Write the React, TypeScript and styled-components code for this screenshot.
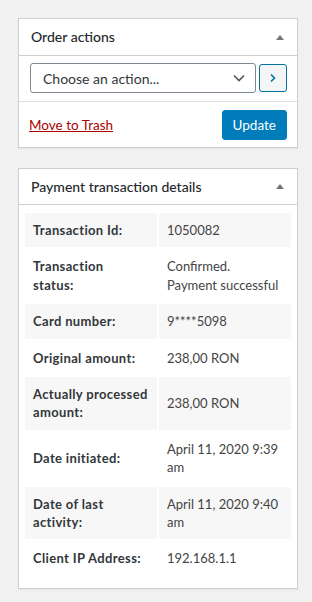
import React from 'react';
import styled, { createGlobalStyle } from 'styled-components';

const GlobalStyle = createGlobalStyle`
  html, body {
    margin: 0;
    padding: 0;
    background: #f1f1f1;
  }
  body {
    font-family: Lato, "Liberation Sans", sans-serif;
    font-size: 13px;
    color: #444;
  }
`;

const Page = styled.div`
  padding: 18px 15px 14px 18px;
  width: 280px;
  display: flex;
  flex-direction: column;
  gap: 20px;
`;

const Panel = styled.div`
  background: #fff;
  border: 1px solid #ccd0d4;
  box-shadow: 0 1px 1px rgba(0, 0, 0, 0.04);
`;

const PanelHeader = styled.div<{ $tall?: boolean }>`
  display: flex;
  align-items: center;
  justify-content: space-between;
  height: ${(p) => (p.$tall ? '36px' : '35px')};
  padding: 0 13px 0 12px;
  border-bottom: 1px solid #ccd0d4;
`;

const PanelTitle = styled.h2`
  margin: 0;
  font-size: 14px;
  font-weight: 500;
  color: #23282d;
  line-height: 1.4;
`;

const Toggle = styled.span`
  width: 0;
  height: 0;
  border-left: 4px solid transparent;
  border-right: 4px solid transparent;
  border-bottom: 5px solid #72777c;
`;

const Section = styled.div<{ $divider?: boolean }>`
  display: flex;
  align-items: center;
  justify-content: space-between;
  gap: 3px;
  padding: ${(p) => (p.$divider ? '7px 10px 8px 11px' : '8px 10px 7px 10px')};
  border-bottom: ${(p) => (p.$divider ? '1px solid #ddd' : 'none')};
`;

const SelectBox = styled.div`
  flex: 1;
  height: 28px;
  display: flex;
  align-items: center;
  justify-content: space-between;
  padding: 0 10px 0 12px;
  border: 1px solid #7e8993;
  border-radius: 3px;
  font-size: 14px;
  color: #32373c;
`;

const GoButton = styled.button`
  width: 28px;
  height: 28px;
  padding: 0;
  display: flex;
  align-items: center;
  justify-content: center;
  background: #f3f5f6;
  border: 1px solid #0071a1;
  border-radius: 3px;
`;

const TrashLink = styled.a`
  color: #a00;
  text-decoration: underline;
  font-size: 13.5px;
`;

const UpdateButton = styled.button`
  height: 30px;
  padding: 0 10px;
  background: #007cba;
  border: 1px solid #007cba;
  border-radius: 3px;
  color: #fff;
  font-family: inherit;
  font-size: 13.5px;
`;

const Inside = styled.div`
  padding: 6px 4px 10px;
`;

const Table = styled.table`
  width: 100%;
  table-layout: fixed;
  border-spacing: 2px;
`;

const Row = styled.tr<{ $alt: boolean }>`
  background: ${(p) => (p.$alt ? '#f7f7f7' : '#fff')};
`;

const Label = styled.th`
  text-align: left;
  vertical-align: middle;
  padding: 8px;
  font-weight: 700;
  letter-spacing: 0.35px;
  white-space: pre-line;
  color: #32373c;
  line-height: 18.4px;
`;

const Value = styled.td`
  vertical-align: middle;
  padding: 8px;
  color: #444;
  line-height: 18.4px;
`;

const rows: [string, string][] = [
  ['Transaction Id:', '1050082'],
  ['Transaction\nstatus:', 'Confirmed. Payment successful'],
  ['Card number:', '9****5098'],
  ['Original amount:', '238,00 RON'],
  ['Actually processed\namount:', '238,00 RON'],
  ['Date initiated:', 'April 11, 2020 9:39 am'],
  ['Date of last\nactivity:', 'April 11, 2020 9:40 am'],
  ['Client IP Address:', '192.168.1.1'],
];

export default function App() {
  return (
    <>
      <GlobalStyle />
      <Page>
        <Panel>
          <PanelHeader $tall>
            <PanelTitle>Order actions</PanelTitle>
            <Toggle />
          </PanelHeader>
          <Section $divider>
            <SelectBox>
              <span>Choose an action...</span>
              <svg width="12" height="8" viewBox="0 0 12 8">
                <path d="M1 1.5l5 5 5-5" fill="none" stroke="#555" strokeWidth="1.6" />
              </svg>
            </SelectBox>
            <GoButton>
              <svg width="6" height="10" viewBox="0 0 6 10">
                <path d="M1 1.5l3.5 3.5L1 8.5" fill="none" stroke="#0071a1" strokeWidth="1.6" />
              </svg>
            </GoButton>
          </Section>
          <Section>
            <TrashLink href="#">Move to Trash</TrashLink>
            <UpdateButton>Update</UpdateButton>
          </Section>
        </Panel>

        <Panel>
          <PanelHeader>
            <PanelTitle>Payment transaction details</PanelTitle>
            <Toggle />
          </PanelHeader>
          <Inside>
            <Table>
              <tbody>
                {rows.map(([label, value], i) => (
                  <Row key={label} $alt={i % 2 === 0}>
                    <Label>{label}</Label>
                    <Value>{value}</Value>
                  </Row>
                ))}
              </tbody>
            </Table>
          </Inside>
        </Panel>
      </Page>
    </>
  );
}
